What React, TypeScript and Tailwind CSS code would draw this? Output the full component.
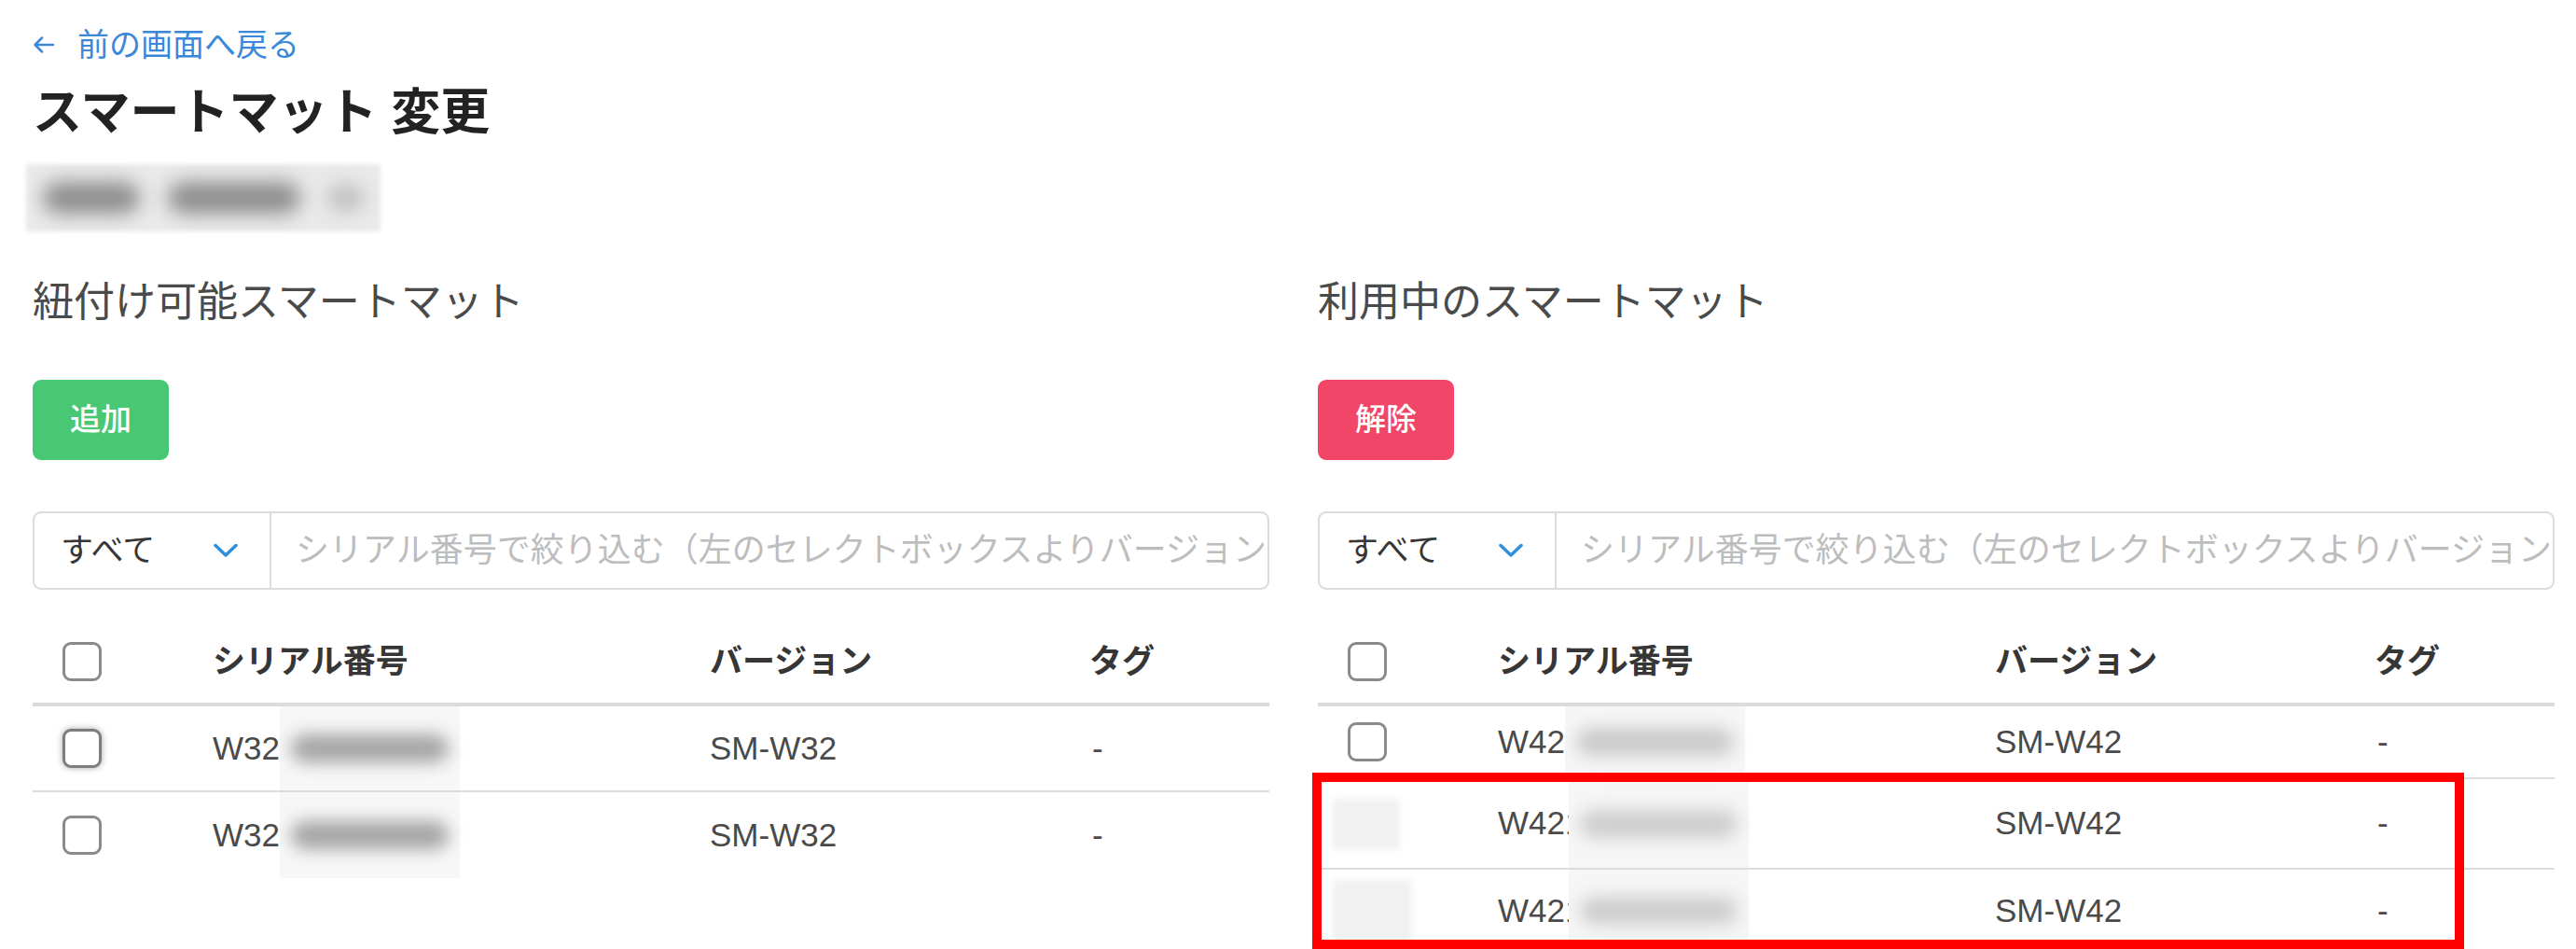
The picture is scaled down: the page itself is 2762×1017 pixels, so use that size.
import React from 'react'

type Row = {
  serial: string
  version: string
  tag: string
  box: 'plain' | 'focus' | 'masked'
  cls: string
  mask: string
  blob: string
  cover?: string
}

const leftRows: Row[] = [
  { serial: 'W32', version: 'SM-W32', tag: '-', box: 'focus', cls: 'h-[92px] border-b-2 border-[#dcdcdc]', mask: 'bg-[#f7f7f7]', blob: 'bg-[#a4a4a4]' },
  { serial: 'W32', version: 'SM-W32', tag: '-', box: 'plain', cls: 'h-[92px]', mask: 'bg-[#f7f7f7]', blob: 'bg-[#a4a4a4]' },
]

const rightRows: Row[] = [
  { serial: 'W42', version: 'SM-W42', tag: '-', box: 'plain', cls: 'h-[78px] border-b-2 border-[#dcdcdc]', mask: 'bg-[#f6f6f6]', blob: 'bg-[#cacaca]' },
  { serial: 'W421', version: 'SM-W42', tag: '-', box: 'masked', cls: 'h-[97px] border-b-2 border-[#dcdcdc]', mask: 'bg-[#f6f6f6]', blob: 'bg-[#cdcdcd]', cover: 'h-[54px] w-[72px]' },
  { serial: 'W421', version: 'SM-W42', tag: '-', box: 'masked', cls: 'h-[88px]', mask: 'bg-[#f6f6f6]', blob: 'bg-[#cdcdcd]', cover: 'h-[67px] w-[85px]' },
]

function Checkbox({ focus }: { focus?: boolean }) {
  return (
    <span
      className={
        focus
          ? 'block w-[42px] h-[42px] rounded-[9px] border-[3px] border-[#7d7d7d] bg-white shadow-[0_0_7px_rgba(0,0,0,0.35)]'
          : 'block w-[42px] h-[42px] rounded-[9px] border-[3px] border-[#8a8a8a] bg-white'
      }
    />
  )
}

function Filter() {
  return (
    <div className="mt-[55px] flex h-[84px] rounded-[9px] border-2 border-[#dbdbdb] bg-white overflow-hidden">
      <div className="flex w-[254px] shrink-0 items-center justify-between border-r-2 border-[#dbdbdb] pl-[28px] pr-[34px]">
        <span className="text-[35px] text-[#363636]">すべて</span>
        <svg width="26" height="16" viewBox="0 0 26 16" fill="none">
          <path d="M2 2.5 L13 13 L24 2.5" stroke="#2f8fdc" strokeWidth="3.5" strokeLinecap="round" strokeLinejoin="round" />
        </svg>
      </div>
      <input
        className="min-w-0 flex-1 bg-transparent pl-[26px] pr-[4px] text-[36px] text-[#363636] outline-none placeholder:text-[#bdbdbd]"
        placeholder="シリアル番号で絞り込む（左のセレクトボックスよりバージョン：選択後に入力）"
      />
    </div>
  )
}

function Table({ rows, children }: { rows: Row[]; children?: React.ReactNode }) {
  return (
    <div className="text-[35px]">
      <div className="grid grid-cols-[193px_533px_407px_1fr] items-center pt-[56px] pb-[23px] border-b-4 border-[#dbdbdb] font-bold text-[#363636] leading-[42px]">
        <div className="pl-[32px]">
          <Checkbox />
        </div>
        <div>シリアル番号</div>
        <div>バージョン</div>
        <div>タグ</div>
      </div>
      <div className="relative">
        {rows.map((r, i) => (
          <div key={i} className={'grid grid-cols-[193px_533px_407px_1fr] items-center text-[#4a4a4a] ' + r.cls}>
            <div className="pl-[32px]">
              {r.box === 'masked' ? (
                <div className={'-ml-[16px] bg-[#f1f1f1] blur-[3px] ' + r.cover} />
              ) : (
                <Checkbox focus={r.box === 'focus'} />
              )}
            </div>
            <div className="flex h-full items-center whitespace-nowrap">
              <span>{r.serial}</span>
              <span className={'flex h-full w-[193px] items-center px-[12px] ' + r.mask + (r.serial.length > 3 ? ' -ml-[15px]' : '')}>
                <span className={'block h-[30px] w-full rounded-full blur-[9px] ' + r.blob} />
              </span>
            </div>
            <div>{r.version}</div>
            <div className="pl-[3px]">{r.tag}</div>
          </div>
        ))}
        {children}
      </div>
    </div>
  )
}

function Panel({
  title,
  button,
  buttonCls,
  children,
}: {
  title: string
  button: string
  buttonCls: string
  children: React.ReactNode
}) {
  return (
    <section>
      <h2 className="text-[44px] leading-[56px] text-[#4a4a4a]">{title}</h2>
      <button className={'mt-[55px] block w-[146px] h-[86px] rounded-[9px] text-[33px] font-medium text-white ' + buttonCls}>
        {button}
      </button>
      <Filter />
      {children}
    </section>
  )
}

export default function App() {
  return (
    <div className="h-[1017px] overflow-hidden bg-white pl-[35px] pr-[23px] pt-[28px] font-['Liberation_Sans','Noto_Sans_CJK_JP',sans-serif]">
      <a href="#" className="flex items-center gap-[24px] text-[34px] leading-[40px] text-[#3b87d9]">
        <svg width="24" height="22" viewBox="0 0 24 22" fill="none">
          <path d="M22 11H3 M10 3.5 L2.5 11 L10 18.5" stroke="#3b87d9" strokeWidth="2.5" strokeLinecap="round" strokeLinejoin="round" />
        </svg>
        前の画面へ戻る
      </a>
      <h1 className="mt-[22px] text-[53px] font-bold leading-[62px] text-[#222]">スマートマット 変更</h1>

      {/* マスキングされた店舗名 */}
      <div className="mt-[24px] ml-[-7px] flex h-[72px] w-[380px] items-center gap-[30px] bg-[#eaeaea] px-[18px] blur-[2px]">
        <span className="h-[34px] w-[110px] rounded-full bg-[#8e8e8e] blur-[10px]" />
        <span className="h-[34px] w-[150px] rounded-full bg-[#8e8e8e] blur-[10px]" />
        <span className="h-[28px] w-[40px] rounded-full bg-[#bdbdbd] blur-[10px]" />
      </div>

      <div className="mt-[48px] grid grid-cols-2 gap-x-[52px]">
        <Panel title="紐付け可能スマートマット" button="追加" buttonCls="bg-[#48c774]">
          <Table rows={leftRows} />
        </Panel>
        <Panel title="利用中のスマートマット" button="解除" buttonCls="bg-[#f14668]">
          <Table rows={rightRows}>
            <div className="pointer-events-none absolute left-[-6px] top-[71px] h-[189px] w-[1235px] border-[10px] border-[#ff0000]" />
          </Table>
        </Panel>
      </div>
    </div>
  )
}
